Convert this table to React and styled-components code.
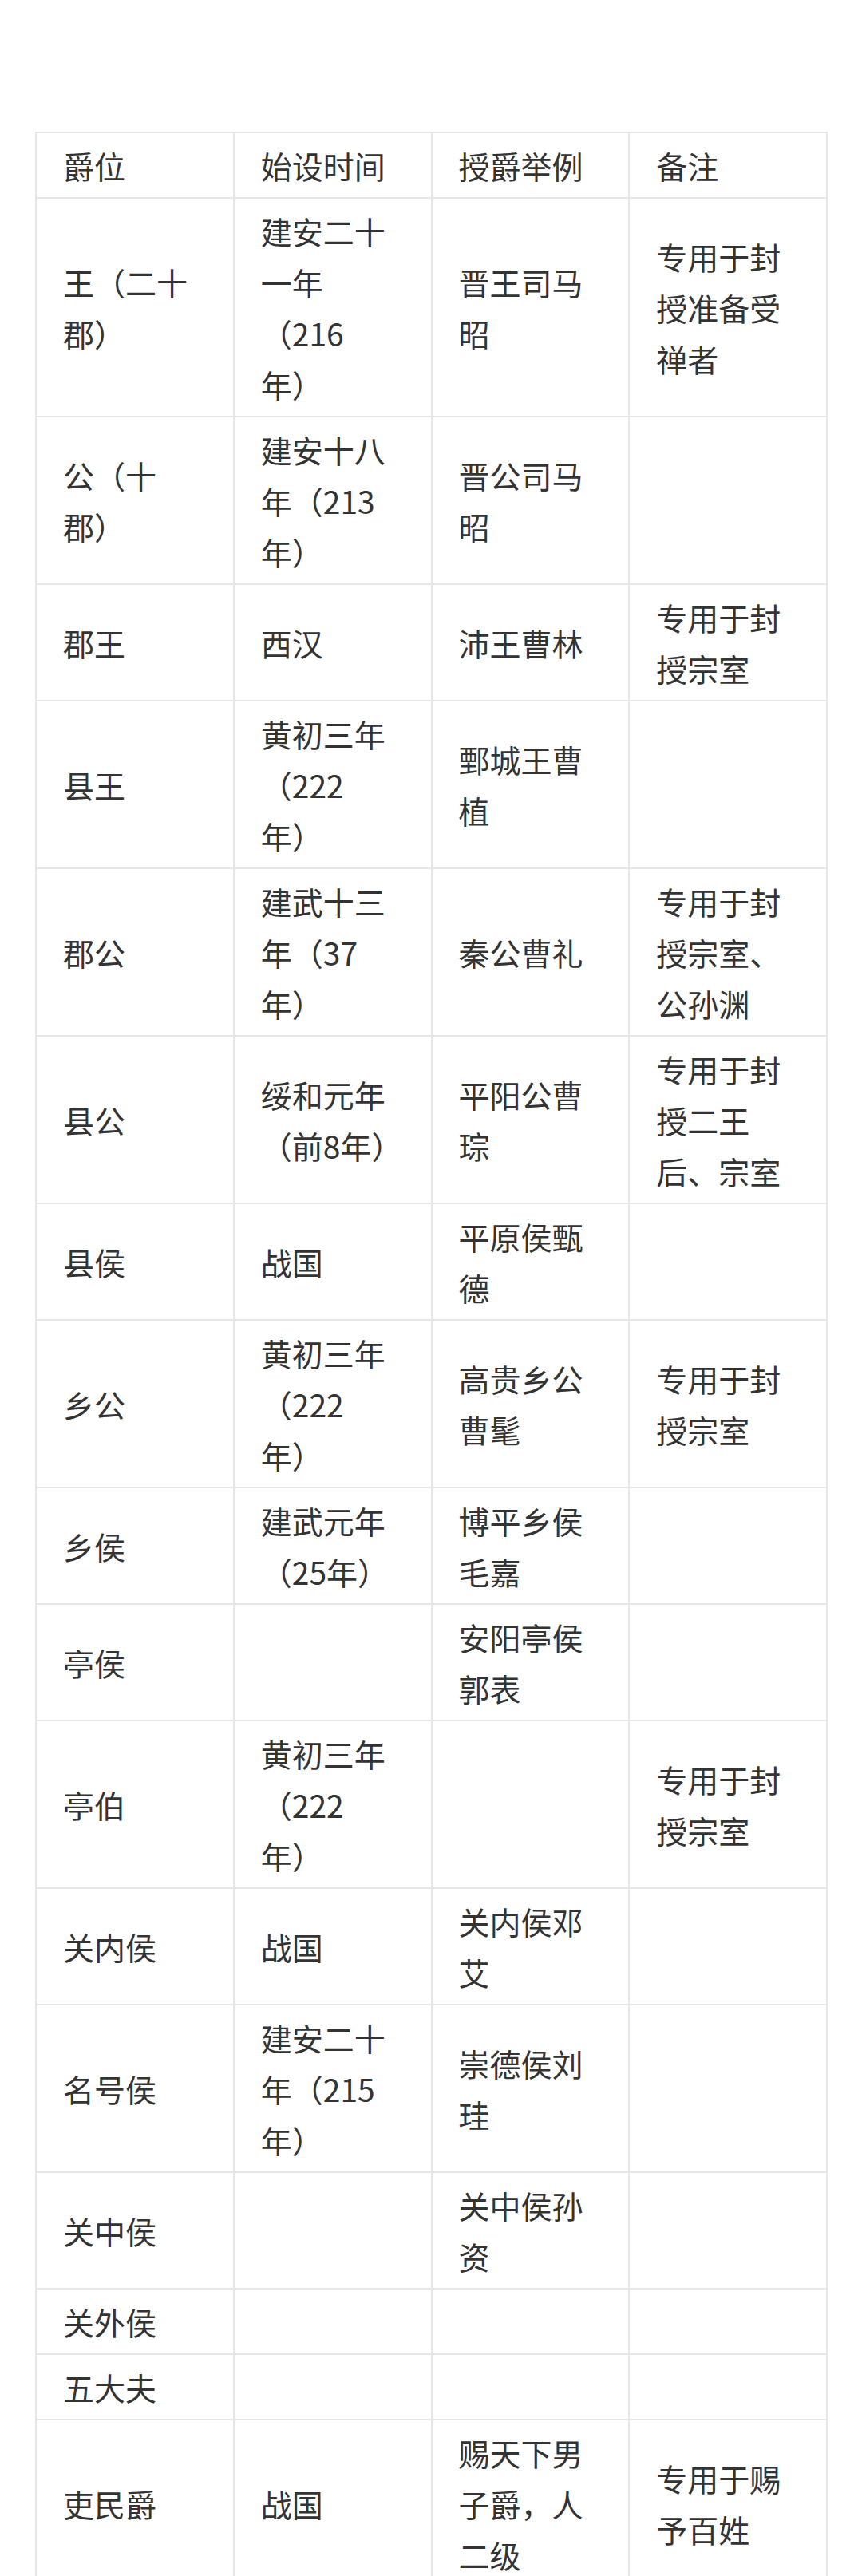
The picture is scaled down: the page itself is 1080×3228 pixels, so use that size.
import React from "react";
import styled, { createGlobalStyle } from "styled-components";

const GlobalStyle = createGlobalStyle`
  html, body {
    margin: 0;
    padding: 0;
    background: #ffffff;
  }
  body {
    font-family: "Noto Sans CJK SC", "Noto Sans", sans-serif;
    color: #333333;
  }
`;

const Page = styled.div`
  padding: 165px 43px 120px 44px;
  box-sizing: border-box;
  width: 1080px;
`;

const Table = styled.table`
  width: 993px;
  border-collapse: collapse;
  table-layout: fixed;
`;

const Cell = styled.td`
  border: 2px solid #e6e6eb;
  padding: 8px 33px;
  font-size: 39px;
  line-height: 64px;
  vertical-align: middle;
  text-align: left;
  font-weight: 400;
  color: #333333;
  word-break: normal;
  text-spacing-trim: space-all;
`;

const HeadCell = styled(Cell).attrs({ as: "th" })``;

const headers = ["爵位", "始设时间", "授爵举例", "备注"];

const rows = [
  ["王（二十郡）", "建安二十一年（216年）", "晋王司马昭", "专用于封授准备受禅者"],
  ["公（十郡）", "建安十八年（213年）", "晋公司马昭", ""],
  ["郡王", "西汉", "沛王曹林", "专用于封授宗室"],
  ["县王", "黄初三年（222年）", "鄄城王曹植", ""],
  ["郡公", "建武十三年（37年）", "秦公曹礼", "专用于封授宗室、公孙渊"],
  ["县公", "绥和元年（前8年）", "平阳公曹琮", "专用于封授二王后、宗室"],
  ["县侯", "战国", "平原侯甄德", ""],
  ["乡公", "黄初三年（222年）", "高贵乡公曹髦", "专用于封授宗室"],
  ["乡侯", "建武元年（25年）", "博平乡侯毛嘉", ""],
  ["亭侯", "", "安阳亭侯郭表", ""],
  ["亭伯", "黄初三年（222年）", "", "专用于封授宗室"],
  ["关内侯", "战国", "关内侯邓艾", ""],
  ["名号侯", "建安二十年（215年）", "崇德侯刘珪", ""],
  ["关中侯", "", "关中侯孙资", ""],
  ["关外侯", "", "", ""],
  ["五大夫", "", "", ""],
  ["吏民爵", "战国", "赐天下男子爵，人二级", "专用于赐予百姓"],
];

export default function App() {
  return (
    <>
      <GlobalStyle />
      <Page>
        <Table>
          <thead>
            <tr>
              {headers.map((h) => (
                <HeadCell key={h}>{h}</HeadCell>
              ))}
            </tr>
          </thead>
          <tbody>
            {rows.map((r, i) => (
              <tr key={i}>
                {r.map((c, j) => (
                  <Cell key={j}>{c}</Cell>
                ))}
              </tr>
            ))}
          </tbody>
        </Table>
      </Page>
    </>
  );
}
